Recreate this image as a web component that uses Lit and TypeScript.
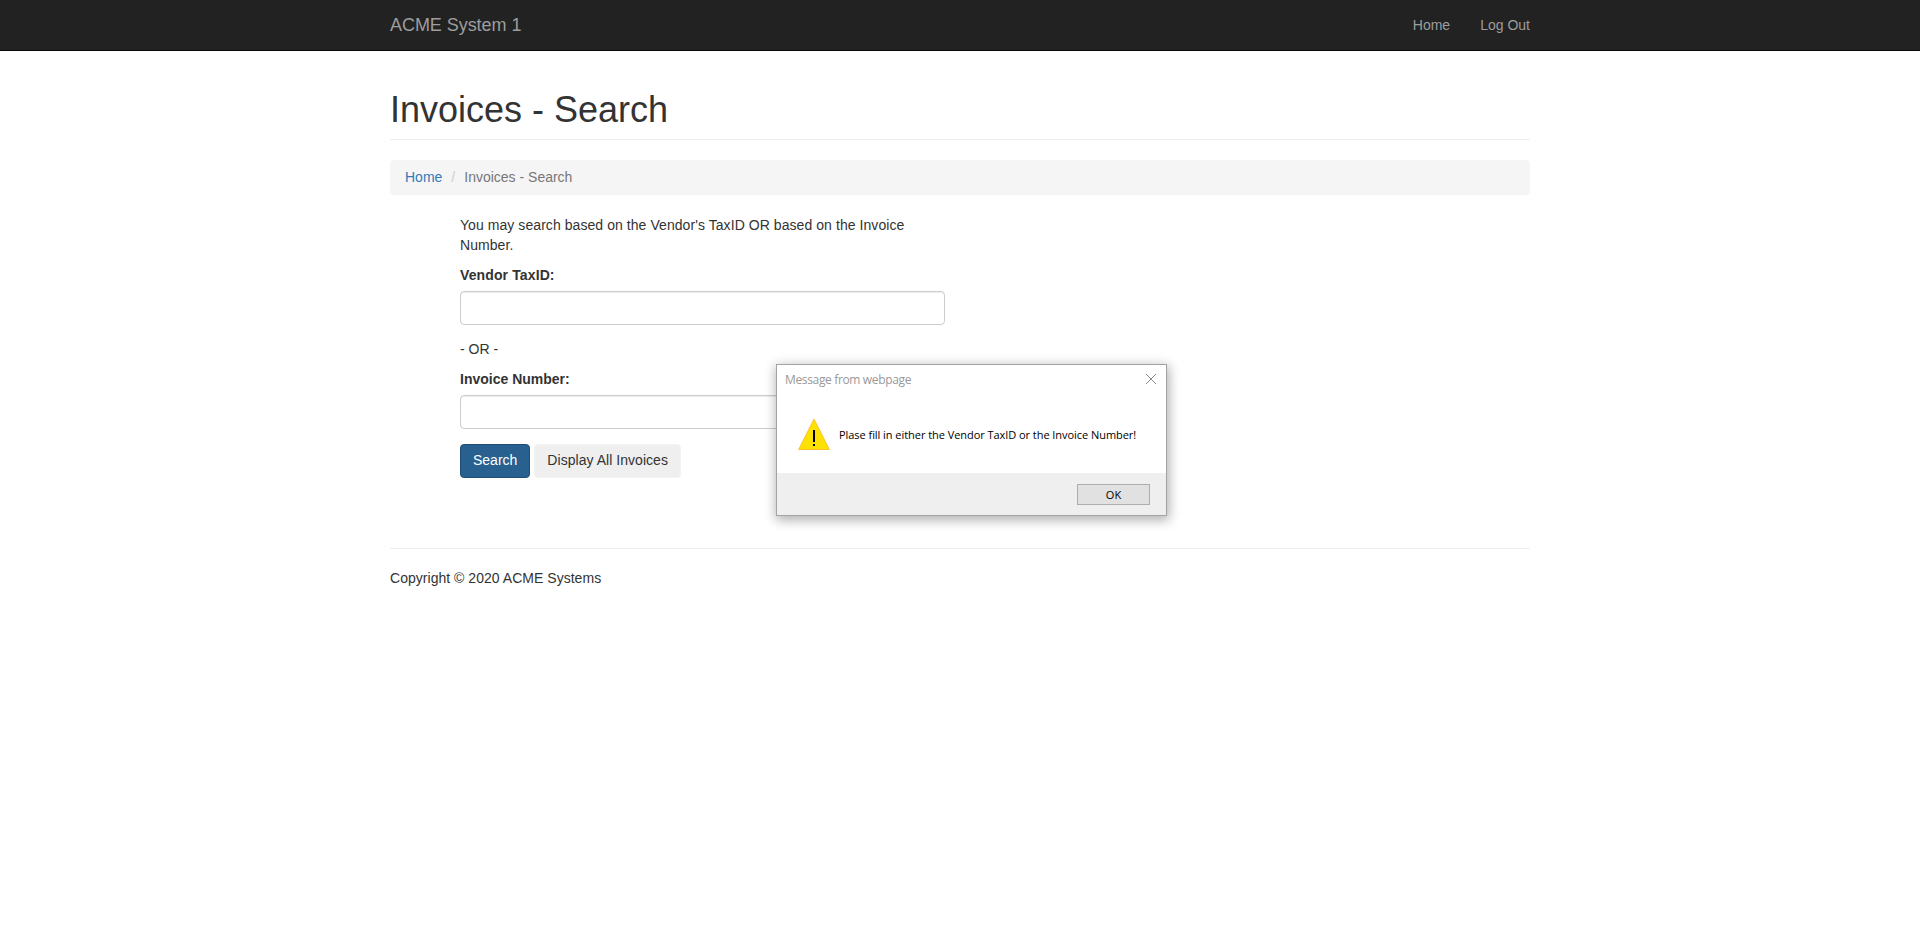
import { LitElement, html, css } from "lit";
import { customElement } from "lit/decorators.js";

@customElement("message-dialog")
export class MessageDialog extends LitElement {
  static styles = css`
    :host {
      position: absolute;
      left: 776px;
      top: 364px;
      width: 391px;
      height: 152px;
      box-sizing: border-box;
      display: flex;
      flex-direction: column;
      border: 1px solid #a3a3a3;
      background: #fff;
      box-shadow: 1px 3px 11px 1px rgba(0, 0, 0, 0.32);
      font-family: "Open Sans", "Noto Sans", sans-serif;
      font-size: 11px;
      color: #000;
    }
    .title {
      display: flex;
      justify-content: space-between;
      height: 30px;
      padding: 0 9px 0 8px;
      line-height: 30px;
      font-size: 12px;
      letter-spacing: -0.35px;
      color: #999;
    }
    .title svg { margin-top: 8px; }
    .title span, .body span { white-space: nowrap; }
    .body {
      flex: 1;
      display: flex;
      align-items: flex-start;
      padding: 23px 0 0 21px;
    }
    .body span {
      margin: 7px 0 0 9px;
      line-height: 20px;
      letter-spacing: -0.05px;
    }
    .actions {
      display: flex;
      justify-content: flex-end;
      height: 42px;
      box-sizing: border-box;
      padding: 11px 16px 0 0;
      background: #efefef;
    }
    button {
      width: 73px;
      height: 21px;
      padding: 0;
      border: 1px solid #adadad;
      background: #e1e1e1;
      font: inherit;
      line-height: 19px;
      color: #000;
    }
  `;

  render() {
    return html`
      <div class="title">
        <span class="caption">Message from webpage</span>
        <svg width="12" height="12" viewBox="0 0 12 12">
          <path d="M1 1 11 11M11 1 1 11" stroke="#8c8c8c" fill="none" />
        </svg>
      </div>
      <div class="body">
        <svg width="32" height="32" viewBox="0 0 32 32">
          <path d="M16 1 31.3 31.5H.7Z" fill="#fde100" stroke="#fdc02c" stroke-linejoin="round" />
          <path d="M15 12h2v12h-2zM15 26h2v2h-2z" fill="#000" />
        </svg>
        <span class="message">Plase fill in either the Vendor TaxID or the Invoice Number!</span>
      </div>
      <div class="actions"><button>OK</button></div>
    `;
  }
}

@customElement("app-root")
export class AppRoot extends LitElement {
  static styles = css`
    :host {
      display: block;
      position: relative;
      min-height: 933px;
      background: #fff;
      font: 14px/20px "Liberation Sans", Arial, sans-serif;
      color: #333;
    }
    a { text-decoration: none; }
    .container {
      width: 1140px;
      margin: 0 auto;
    }
    .navbar {
      background: #222;
      border-bottom: 1px solid #080808;
    }
    .navbar .container {
      display: flex;
      justify-content: space-between;
      align-items: center;
      height: 50px;
    }
    .navbar a { color: #9d9d9d; }
    .navbar .brand { font-size: 18px; letter-spacing: -0.05px; }
    .links { display: flex; gap: 30px; }
    h1 {
      margin: 39px 0 20px;
      padding-bottom: 9px;
      border-bottom: 1px solid #eee;
      font-size: 36px;
      font-weight: 400;
      line-height: 40px;
    }
    .breadcrumb {
      display: flex;
      padding: 7px 15px 8px;
      margin-bottom: 20px;
      background: #f5f5f5;
      border-radius: 4px;
      color: #777;
    }
    .breadcrumb a { color: #337ab7; }
    .slash { color: #ccc; padding: 0 9px; }
    form {
      width: 485px;
      margin-left: 70px;
    }
    p { margin: 0 0 10px; }
    .hint { letter-spacing: 0.065px; }
    label {
      display: block;
      margin-bottom: 6px;
      font-weight: 700;
    }
    .tax { letter-spacing: 0.12px; }
    input {
      display: block;
      box-sizing: border-box;
      width: 100%;
      height: 34px;
      margin-bottom: 14px;
      border: 1px solid #ccc;
      border-radius: 4px;
      box-shadow: inset 0 1px 1px rgba(0, 0, 0, 0.075);
    }
    .buttons { display: flex; gap: 4px; padding-top: 1px; }
    .btn {
      height: 34px;
      padding: 0 12px 2px;
      border: 1px solid #f3f3f3;
      border-radius: 4px;
      background: #efefef;
      font: inherit;
      color: #333;
    }
    .btn.all { letter-spacing: 0.04px; }
    .btn.primary {
      background: #286090;
      border-color: #204d74;
      color: #fff;
    }
    footer {
      margin-top: 70px;
      padding-top: 19px;
      border-top: 1px solid #eee;
      letter-spacing: 0.03px;
    }
  `;

  render() {
    return html`
      <nav class="navbar">
        <div class="container">
          <a class="brand">ACME System 1</a>
          <div class="links"><a>Home</a><a>Log Out</a></div>
        </div>
      </nav>
      <main class="container">
        <h1>Invoices - Search</h1>
        <div class="breadcrumb">
          <a>Home</a><span class="slash">/</span><span>Invoices - Search</span>
        </div>
        <form>
          <p class="hint">You may search based on the Vendor's TaxID OR based on the Invoice Number.</p>
          <label class="tax" for="tax">Vendor TaxID:</label>
          <input id="tax" />
          <p>- OR -</p>
          <label for="invoice">Invoice Number:</label>
          <input id="invoice" />
          <div class="buttons">
            <button type="button" class="btn primary">Search</button>
            <button type="button" class="btn all">Display All Invoices</button>
          </div>
        </form>
        <footer>Copyright © 2020 ACME Systems</footer>
      </main>
      <message-dialog></message-dialog>
    `;
  }
}
